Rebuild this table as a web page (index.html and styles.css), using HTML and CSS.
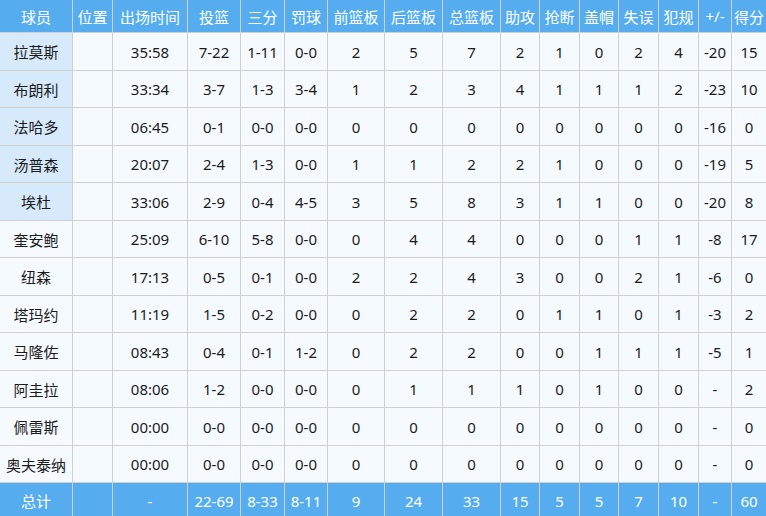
FILE: index.html
```html
<!DOCTYPE html>
<html lang="zh">
<head>
<meta charset="utf-8">
<link rel="stylesheet" href="styles.css">
</head>
<body>
<div class="box" role="table">
  <div class="row head" role="row">
    <div class="c">球员</div><div class="c">位置</div><div class="c">出场时间</div><div class="c">投篮</div><div class="c">三分</div><div class="c">罚球</div><div class="c">前篮板</div><div class="c">后篮板</div><div class="c">总篮板</div><div class="c">助攻</div><div class="c">抢断</div><div class="c">盖帽</div><div class="c">失误</div><div class="c">犯规</div><div class="c">+/-</div><div class="c">得分</div>
  </div>
  <div class="row starter" role="row"><div class="c">拉莫斯</div><div class="c"></div><div class="c">35:58</div><div class="c">7-22</div><div class="c">1-11</div><div class="c">0-0</div><div class="c">2</div><div class="c">5</div><div class="c">7</div><div class="c">2</div><div class="c">1</div><div class="c">0</div><div class="c">2</div><div class="c">4</div><div class="c">-20</div><div class="c">15</div></div>
  <div class="row starter" role="row"><div class="c">布朗利</div><div class="c"></div><div class="c">33:34</div><div class="c">3-7</div><div class="c">1-3</div><div class="c">3-4</div><div class="c">1</div><div class="c">2</div><div class="c">3</div><div class="c">4</div><div class="c">1</div><div class="c">1</div><div class="c">1</div><div class="c">2</div><div class="c">-23</div><div class="c">10</div></div>
  <div class="row starter" role="row"><div class="c">法哈多</div><div class="c"></div><div class="c">06:45</div><div class="c">0-1</div><div class="c">0-0</div><div class="c">0-0</div><div class="c">0</div><div class="c">0</div><div class="c">0</div><div class="c">0</div><div class="c">0</div><div class="c">0</div><div class="c">0</div><div class="c">0</div><div class="c">-16</div><div class="c">0</div></div>
  <div class="row starter" role="row"><div class="c">汤普森</div><div class="c"></div><div class="c">20:07</div><div class="c">2-4</div><div class="c">1-3</div><div class="c">0-0</div><div class="c">1</div><div class="c">1</div><div class="c">2</div><div class="c">2</div><div class="c">1</div><div class="c">0</div><div class="c">0</div><div class="c">0</div><div class="c">-19</div><div class="c">5</div></div>
  <div class="row starter" role="row"><div class="c">埃杜</div><div class="c"></div><div class="c">33:06</div><div class="c">2-9</div><div class="c">0-4</div><div class="c">4-5</div><div class="c">3</div><div class="c">5</div><div class="c">8</div><div class="c">3</div><div class="c">1</div><div class="c">1</div><div class="c">0</div><div class="c">0</div><div class="c">-20</div><div class="c">8</div></div>
  <div class="row" role="row"><div class="c">奎安鲍</div><div class="c"></div><div class="c">25:09</div><div class="c">6-10</div><div class="c">5-8</div><div class="c">0-0</div><div class="c">0</div><div class="c">4</div><div class="c">4</div><div class="c">0</div><div class="c">0</div><div class="c">0</div><div class="c">1</div><div class="c">1</div><div class="c">-8</div><div class="c">17</div></div>
  <div class="row" role="row"><div class="c">纽森</div><div class="c"></div><div class="c">17:13</div><div class="c">0-5</div><div class="c">0-1</div><div class="c">0-0</div><div class="c">2</div><div class="c">2</div><div class="c">4</div><div class="c">3</div><div class="c">0</div><div class="c">0</div><div class="c">2</div><div class="c">1</div><div class="c">-6</div><div class="c">0</div></div>
  <div class="row" role="row"><div class="c">塔玛约</div><div class="c"></div><div class="c">11:19</div><div class="c">1-5</div><div class="c">0-2</div><div class="c">0-0</div><div class="c">0</div><div class="c">2</div><div class="c">2</div><div class="c">0</div><div class="c">1</div><div class="c">1</div><div class="c">0</div><div class="c">1</div><div class="c">-3</div><div class="c">2</div></div>
  <div class="row" role="row"><div class="c">马隆佐</div><div class="c"></div><div class="c">08:43</div><div class="c">0-4</div><div class="c">0-1</div><div class="c">1-2</div><div class="c">0</div><div class="c">2</div><div class="c">2</div><div class="c">0</div><div class="c">0</div><div class="c">1</div><div class="c">1</div><div class="c">1</div><div class="c">-5</div><div class="c">1</div></div>
  <div class="row" role="row"><div class="c">阿圭拉</div><div class="c"></div><div class="c">08:06</div><div class="c">1-2</div><div class="c">0-0</div><div class="c">0-0</div><div class="c">0</div><div class="c">1</div><div class="c">1</div><div class="c">1</div><div class="c">0</div><div class="c">1</div><div class="c">0</div><div class="c">0</div><div class="c">-</div><div class="c">2</div></div>
  <div class="row" role="row"><div class="c">佩雷斯</div><div class="c"></div><div class="c">00:00</div><div class="c">0-0</div><div class="c">0-0</div><div class="c">0-0</div><div class="c">0</div><div class="c">0</div><div class="c">0</div><div class="c">0</div><div class="c">0</div><div class="c">0</div><div class="c">0</div><div class="c">0</div><div class="c">-</div><div class="c">0</div></div>
  <div class="row" role="row"><div class="c">奥夫泰纳</div><div class="c"></div><div class="c">00:00</div><div class="c">0-0</div><div class="c">0-0</div><div class="c">0-0</div><div class="c">0</div><div class="c">0</div><div class="c">0</div><div class="c">0</div><div class="c">0</div><div class="c">0</div><div class="c">0</div><div class="c">0</div><div class="c">-</div><div class="c">0</div></div>
  <div class="row total" role="row"><div class="c">总计</div><div class="c"></div><div class="c">-</div><div class="c">22-69</div><div class="c">8-33</div><div class="c">8-11</div><div class="c">9</div><div class="c">24</div><div class="c">33</div><div class="c">15</div><div class="c">5</div><div class="c">5</div><div class="c">7</div><div class="c">10</div><div class="c">-</div><div class="c">60</div></div>
</div>
</body>
</html>
```

FILE: styles.css
```css
html, body {
  margin: 0;
  padding: 0;
  overflow: hidden;
  background: #ffffff;
}

.box {
  display: grid;
  grid-template-columns: 73px 40px 75px 53px 44px 43px 57px 58px 58px 39px 40px 39px 40px 40px 33px 35px;
  grid-template-rows: 33px repeat(6, 38px 37px) 36px;
  width: 767px;
  font-family: "Noto Sans", "Noto Sans CJK SC", sans-serif;
  font-size: 15px;
  color: #1b1b1b;
}

.row {
  display: contents;
}

.c {
  box-sizing: border-box;
  display: flex;
  align-items: center;
  justify-content: center;
  white-space: nowrap;
  overflow: hidden;
  background: #f5faff;
  border-right: 1px solid #d0d0d0;
  border-bottom: 1px solid #d0d0d0;
}

.starter .c:first-child {
  background: #d6eafc;
}

.head .c,
.total .c {
  background: #55adef;
  color: #ffffff;
}
```
